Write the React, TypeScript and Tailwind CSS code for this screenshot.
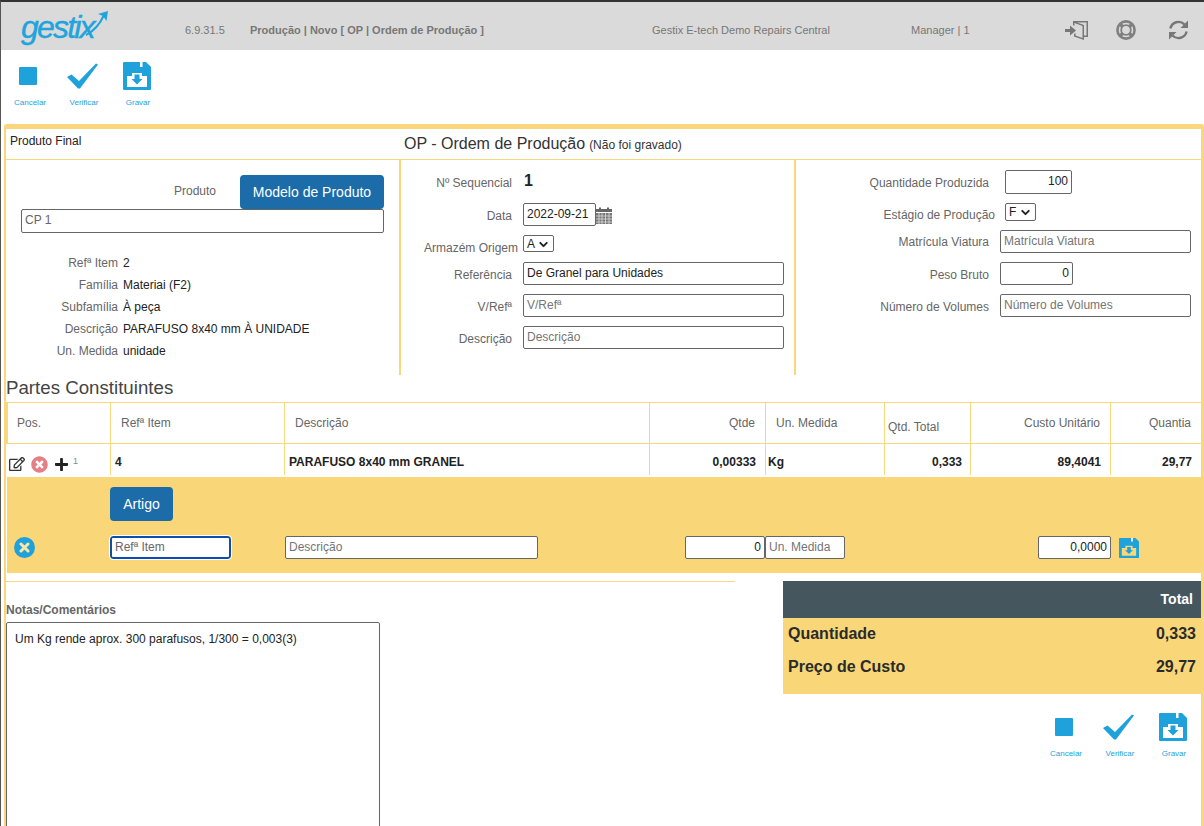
import { ReactNode } from "react";
import { ChevronDown } from "lucide-react";
import { FaRegEdit, FaTimesCircle, FaPlus } from "react-icons/fa";

const StopIcon = () => (
  <svg className="-ml-[2px]" width="18" height="18" viewBox="0 0 18 18"><rect width="18" height="18" rx="1" fill="#1fa2dc" /></svg>
);

const CheckIcon = () => (
  <svg width="31" height="26" viewBox="0 0 31 26"><path d="M0 14 L4.5 11.5 L12 18 L29 0.5 L31 1.5 L13 25.5 L11 25.5 Z" fill="#1fa2dc" /></svg>
);

const SaveIcon = ({ size = 28, tray = "#fff" }: { size?: number; tray?: string }) => (
  <svg width={size} height={size} viewBox="0 0 28 28">
    <path d="M1 0 H23 L28 5 V27 Q28 28 27 28 H1 Q0 28 0 27 V1 Q0 0 1 0 Z" fill="#1fa2dc" />
    <rect x="17" y="0" width="2.5" height="5" fill="#fff" />
    <path d="M4 14 H9 V11 H19 V14 H24 V25 H4 Z" fill={tray} />
    <path d="M11.5 12.5 H16.5 V17 H19.5 L14 22.5 L8.5 17 H11.5 Z" fill="#1fa2dc" />
  </svg>
);

const DoorIcon = () => (
  <svg width="24" height="20" viewBox="0 0 24 20" fill="#777">
    <path d="M0 9 H5 V5.5 L11 10.5 L5 15.5 V12 H0 Z" />
    <path d="M8 1 H23 V17 H19 V15.5 H21.5 V2.5 H12 L19 5 V20 L9 16.5 V14 L10.5 13 V15.5 L17.5 18 V6 L9.5 3 V6 L8 5 Z" />
  </svg>
);

const LifeBuoyIcon = () => (
  <svg width="20" height="20" viewBox="0 0 20 20" fill="none" stroke="#808080">
    <circle cx="10" cy="10" r="8.6" strokeWidth="2.6" />
    <circle cx="10" cy="10" r="4.8" strokeWidth="1.8" />
    <path d="M4 4 L7 7 M16 4 L13 7 M4 16 L7 13 M16 16 L13 13" strokeWidth="3.4" />
  </svg>
);

const RefreshIcon = () => (
  <svg width="21" height="22" viewBox="0 0 21 22" fill="none">
    <path d="M16.5 5.5 A8.3 8.3 0 0 0 2.4 9.5" stroke="#777" strokeWidth="2.4" />
    <path d="M4.5 16.5 A8.3 8.3 0 0 0 18.6 12.5" stroke="#777" strokeWidth="2.4" />
    <path d="M20 1.5 V9 H12.5 Z" fill="#777" />
    <path d="M1 20.5 V13 H8.5 Z" fill="#777" />
  </svg>
);

const CalendarIcon = () => (
  <svg width="16" height="17" viewBox="0 0 16 17">
    <path d="M0 2 H3 V0.5 H5 V2 H11 V0.5 H13 V2 H16 V5 H0 Z" fill="#666" />
    <path d="M0 6 H16 V17 H0 Z" fill="#777" />
    <path d="M3 6 V17 M6 6 V17 M9.5 6 V17 M13 6 V17 M0 9 H16 M0 12 H16 M0 15 H16" stroke="#ddd" strokeWidth="0.8" />
  </svg>
);

const Logo = () => (
  <div className="relative w-[102px] h-[48px] ml-[20px]">
    <span className="absolute left-0 top-[7px] text-[32px] leading-[36px] italic tracking-[-1.8px] text-[#21a3dc] [-webkit-text-stroke:0.4px_#21a3dc]">gestix</span>
    <svg className="absolute left-[40px] top-[7px]" width="48" height="30" viewBox="0 0 48 30" fill="none">
      <path d="M25 26 C33 22 39 15 43 6" stroke="#21a3dc" strokeWidth="2" />
      <path d="M47 2 L45.5 12 L42 7 L37 5 Z" fill="#21a3dc" />
    </svg>
  </div>
);

const Tool = ({ icon, label }: { icon: ReactNode; label: string }) => (
  <div className="w-[54px] flex flex-col items-center">
    <div className="h-[28px] flex items-center justify-center pr-[3px]">{icon}</div>
    <div className="mt-[7px] text-[8px] leading-[12px] text-[#21a3dc]">{label}</div>
  </div>
);

const Tools = () => (
  <>
    <Tool icon={<StopIcon />} label="Cancelar" />
    <Tool icon={<CheckIcon />} label="Verificar" />
    <Tool icon={<SaveIcon />} label="Gravar" />
  </>
);

const Input = ({ value, placeholder, className }: { value?: string; placeholder?: string; className: string }) => (
  <input
    defaultValue={value}
    placeholder={placeholder}
    className={`h-[23px] border border-[#666] rounded-[2px] px-[3px] pb-[2px] text-[12px] text-[#222] placeholder:text-[#757575] bg-white ${className}`}
  />
);

const Select = ({ value, className }: { value: string; className: string }) => (
  <div className={`relative border border-[#666] rounded-[2px] bg-white text-[12px] leading-[14px] pl-[3px] pt-[1px] text-[#222] ${className}`}>
    {value}
    <ChevronDown className="absolute right-[3px] top-[2px] text-[#222]" size={13} strokeWidth={3.5} />
  </div>
);

const Detail = ({ label, value }: { label: string; value: string }) => (
  <div className="flex items-center h-[22px]">
    <div className="w-[112px] text-right text-[#666]">{label}</div>
    <div className="pl-[5px] text-[#222]">{value}</div>
  </div>
);

const Field = ({ label, labelClass, className, children }: { label: string; labelClass: string; className: string; children: ReactNode }) => (
  <div className={`flex items-center ${className}`}>
    <div className={`text-right text-[#666] shrink-0 ${labelClass}`}>{label}</div>
    {children}
  </div>
);

const gridCols = "grid grid-cols-[103px_174px_365px_116px_119px_86px_140px_90px] border-l-2";
const headCell = "border-r border-[#fad77c] flex items-center text-[#666]";
const rowCell = "border-r border-[#fad77c] flex items-center pt-[4px] font-bold text-[#222]";

export default function App() {
  return (
    <div className="w-[1204px] h-[826px] overflow-hidden bg-white border-t-2 border-t-[#333] border-l border-l-[#555] font-['Liberation_Sans',Arial,sans-serif] text-[12px] leading-[14px] text-[#222]">
      {/* top bar */}
      <div className="h-[48px] bg-[#dadada] flex items-center text-[11px] text-[#777]">
        <Logo />
        <div className="ml-[62px] pt-[8px] w-[65px]">6.9.31.5</div>
        <div className="pt-[8px] w-[402px] font-bold">Produção | Novo [ OP | Ordem de Produção ]</div>
        <div className="pt-[8px] w-[259px]">Gestix E-tech Demo Repairs Central</div>
        <div className="pt-[8px] w-[154px]">Manager | 1</div>
        <div className="pt-[8px] w-[51px]"><DoorIcon /></div>
        <div className="pt-[8px] w-[52px]"><LifeBuoyIcon /></div>
        <div className="pt-[8px]"><RefreshIcon /></div>
      </div>

      {/* toolbar */}
      <div className="h-[74px] pt-[12px] pl-[2px] flex">
        <Tools />
      </div>

      {/* panel */}
      <div className="ml-[3px] w-[1200px] h-[710px] border-l-2 border-r-[3px] border-t-[5px] border-[#fad77c] rounded-t-[3px]">
        <div className="h-[31px] border-b border-[#fad77c] flex">
          <div className="w-[398px] pl-[4px] pt-[5px]">Produto Final</div>
          <div className="pt-[6px]">
            <span className="text-[16px] leading-[18px] text-[#333]">OP - Ordem de Produção</span>
            <span className="ml-[4px] text-[12px] text-[#333]">(Não foi gravado)</span>
          </div>
        </div>

        <div className="h-[215px] flex">
          <div className="w-[394px]">
            <div className="mt-[15px] h-[34px] flex items-center">
              <div className="w-[210px] text-right text-[#666] pb-[2px]">Produto</div>
              <button className="ml-[24px] w-[144px] h-[34px] rounded-[4px] bg-[#1b6ca8] text-white text-[14px]">Modelo de Produto</button>
            </div>
            <Input value="CP 1" className="ml-[15px] w-[363px] !h-[24px] !text-[#666] block" />
            <div className="mt-[19px]">
              <Detail label="Refª Item" value="2" />
              <Detail label="Família" value="Materiai (F2)" />
              <Detail label="Subfamília" value="À peça" />
              <Detail label="Descrição" value="PARAFUSO 8x40 mm À UNIDADE" />
              <Detail label="Un. Medida" value="unidade" />
            </div>
          </div>

          <div className="w-[395px] -ml-[1px] border-l-2 border-[#fad77c]">
            <Field label="Nº Sequencial" labelClass="w-[111px]" className="mt-[12px] h-[22px]">
              <span className="ml-[12px] pb-[4px] text-[16px] font-bold leading-[18px]">1</span>
            </Field>
            <Field label="Data" labelClass="w-[111px] pt-[3px]" className="mt-[9px] h-[23px]">
              <Input value="2022-09-21" className="ml-[11px] w-[73px]" />
              <span className="pt-[1px]"><CalendarIcon /></span>
            </Field>
            <Field label="Armazém Origem" labelClass="w-[117px] pt-[8px]" className="mt-[9px] h-[17px]">
              <Select value="A" className="ml-[5px] w-[31px] h-[17px]" />
            </Field>
            <Field label="Referência" labelClass="w-[111px] pt-[3px]" className="mt-[10px] h-[23px]">
              <Input value="De Granel para Unidades" className="ml-[11px] w-[261px]" />
            </Field>
            <Field label="V/Refª" labelClass="w-[111px] pt-[3px]" className="mt-[9px] h-[23px]">
              <Input placeholder="V/Refª" className="ml-[11px] w-[261px]" />
            </Field>
            <Field label="Descrição" labelClass="w-[111px] pt-[3px]" className="mt-[9px] h-[23px]">
              <Input placeholder="Descrição" className="ml-[11px] w-[261px]" />
            </Field>
          </div>

          <div className="flex-1 border-l-2 border-[#fad77c]">
            <Field label="Quantidade Produzida" labelClass="w-[193px] pt-[1px]" className="mt-[10px] h-[24px]">
              <Input value="100" className="ml-[16px] w-[67px] !h-[24px] text-right" />
            </Field>
            <Field label="Estágio de Produção" labelClass="w-[199px] pt-[6px]" className="mt-[9px] h-[18px]">
              <Select value="F" className="ml-[10px] w-[31px] h-[18px]" />
            </Field>
            <Field label="Matrícula Viatura" labelClass="w-[193px] pt-[1px]" className="mt-[9px] h-[23px]">
              <Input placeholder="Matrícula Viatura" className="ml-[11px] w-[191px]" />
            </Field>
            <Field label="Peso Bruto" labelClass="w-[193px] pt-[3px]" className="mt-[9px] h-[23px]">
              <Input value="0" className="ml-[11px] w-[73px] text-right" />
            </Field>
            <Field label="Número de Volumes" labelClass="w-[193px] pt-[3px]" className="mt-[9px] h-[23px]">
              <Input placeholder="Número de Volumes" className="ml-[11px] w-[191px]" />
            </Field>
          </div>
        </div>

        <div className="h-[27px] pb-[2px] flex items-center text-[18.7px] leading-[20px] text-[#444]">Partes Constituintes</div>

        {/* parts table */}
        <div className={`${gridCols} h-[42px] border-y border-[#fad77c]`}>
          <div className={`${headCell} pl-[9px]`}>Pos.</div>
          <div className={`${headCell} pl-[10px]`}>Refª Item</div>
          <div className={`${headCell} pl-[10px]`}>Descrição</div>
          <div className={`${headCell} justify-end pr-[10px]`}>Qtde</div>
          <div className={`${headCell} pl-[10px]`}>Un. Medida</div>
          <div className={`${headCell} pl-[3px] pt-[7px]`}>Qtd. Total</div>
          <div className={`${headCell} justify-end pr-[10px]`}>Custo Unitário</div>
          <div className="flex items-center justify-end pr-[10px] text-[#666]">Quantia</div>
        </div>
        <div className={`${gridCols} h-[31px] border-transparent`}>
          <div className={`${rowCell} !font-normal !pt-[9px] pl-[1px]`}>
            <FaRegEdit size={16} className="text-[#333]" />
            <FaTimesCircle size={17} className="ml-[6px] text-[#e57f84]" />
            <FaPlus size={15} className="ml-[6px] text-[#222]" />
            <span className="ml-[4px] mb-[6px] text-[9px] leading-[10px] text-[#888]">1</span>
          </div>
          <div className={`${rowCell} pl-[4px]`}>4</div>
          <div className={`${rowCell} pl-[4px]`}>PARAFUSO 8x40 mm GRANEL</div>
          <div className={`${rowCell} justify-end pr-[9px]`}>0,00333</div>
          <div className={`${rowCell} pl-[2px]`}>Kg</div>
          <div className={`${rowCell} justify-end pr-[8px]`}>0,333</div>
          <div className={`${rowCell} justify-end pr-[9px]`}>89,4041</div>
          <div className="flex items-center justify-end pt-[4px] pr-[9px] font-bold">29,77</div>
        </div>

        <div className="ml-[1px] mt-[2px] h-[96px] bg-[#f9d778] pt-[10px]">
          <button className="ml-[103px] block w-[63px] h-[34px] rounded-[4px] bg-[#1b6ca8] text-white text-[14px]">Artigo</button>
          <div className="mt-[15px] h-[23px] flex items-center">
            <div className="ml-[7px] w-[21px] h-[21px] rounded-full bg-[#1fa2dc] flex items-center justify-center">
              <svg width="11" height="11" viewBox="0 0 11 11"><path d="M2 2 L9 9 M9 2 L2 9" stroke="#f9e6a8" strokeWidth="3" strokeLinecap="round" /></svg>
            </div>
            <input placeholder="Refª Item" className="ml-[75px] w-[121px] h-[23px] rounded-[3px] border-2 border-[#0b4fae] px-[3px] pb-[2px] bg-white text-[12px] placeholder:text-[#666] outline outline-white" />
            <Input placeholder="Descrição" className="ml-[54px] w-[253px]" />
            <Input value="0" className="ml-[147px] w-[80px] text-right" />
            <Input placeholder="Un. Medida" className="w-[80px]" />
            <Input value="0,0000" className="ml-[193px] w-[73px] text-right" />
            <span className="ml-[8px]"><SaveIcon size={20} tray="#f9d778" /></span>
          </div>
        </div>

        <div className="flex mt-[8px]">
          <div className="w-[729px] border-t border-[#fad77c]">
            <div className="mt-[21px] h-[19px] font-bold text-[#666]">Notas/Comentários</div>
            <textarea
              readOnly
              value="Um Kg rende aprox. 300 parafusos, 1/300 = 0,003(3)"
              className="block w-[374px] h-[240px] border border-[#666] rounded-[2px] px-[8px] py-[9px] text-[12px] resize-none"
            />
          </div>
          <div className="ml-[48px] w-[418px]">
            <div className="h-[37px] pb-[2px] bg-[#46565e] flex items-center justify-end pr-[8px] text-[14px] font-bold text-white">Total</div>
            <div className="h-[76px] bg-[#f9d778] px-[5px] text-[16px] font-bold text-[#2b2b2b]">
              <div className="h-[31px] flex justify-between items-center"><span>Quantidade</span><span>0,333</span></div>
              <div className="h-[30px] mt-[3px] flex justify-between items-center"><span>Preço de Custo</span><span>29,77</span></div>
            </div>
            <div className="mt-[19px] flex justify-end">
              <Tools />
            </div>
          </div>
        </div>
      </div>
    </div>
  );
}
